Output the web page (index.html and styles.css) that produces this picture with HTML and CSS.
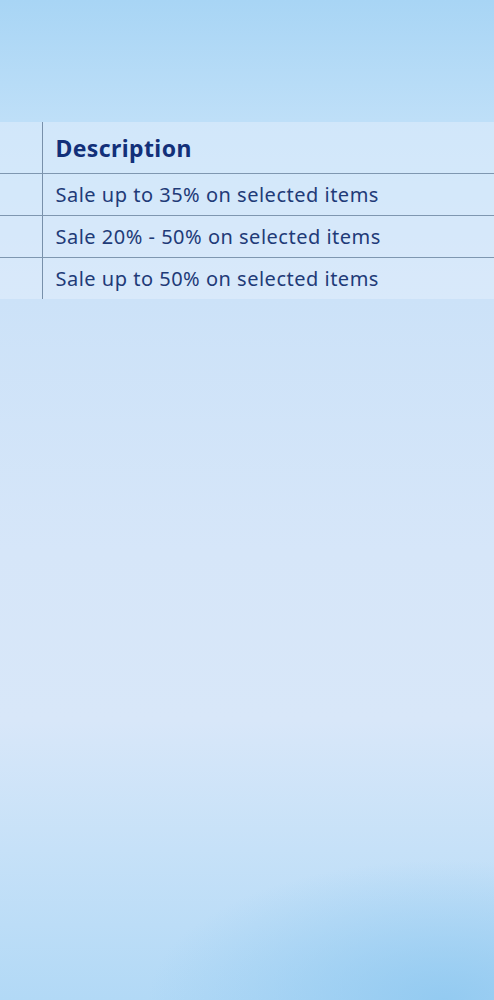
FILE: index.html
```html
<!DOCTYPE html>
<html lang="en">
<head>
  <meta charset="UTF-8">
  <meta name="viewport" content="width=device-width, initial-scale=1.0">
  <title>Sale</title>
  <link rel="stylesheet" href="styles.css">
</head>
<body>
  <div class="page">
    <table class="sale-table">
      <thead>
        <tr>
          <th class="col-side"></th>
          <th>Description</th>
        </tr>
      </thead>
      <tbody>
        <tr>
          <td class="col-side"></td>
          <td>Sale up to 35% on selected items</td>
        </tr>
        <tr>
          <td class="col-side"></td>
          <td>Sale 20% - 50% on selected items</td>
        </tr>
        <tr>
          <td class="col-side"></td>
          <td>Sale up to 50% on selected items</td>
        </tr>
      </tbody>
    </table>
  </div>
</body>
</html>
```

FILE: styles.css
```css
html, body {
  margin: 0;
  height: 100%;
}
body {
  font-family: "Noto Sans", Arial, sans-serif;
  background:
    radial-gradient(ellipse 60% 14% at 90% 100%, rgba(142,200,240,0.85), rgba(142,200,240,0) 100%),
    linear-gradient(to bottom, #a8d5f5 0%, #bedff8 12%, #cce2f8 30%, #d6e6f9 55%, #d8e7f9 72%, #c6e1f8 85%, #b2d9f6 100%);
}
.page {
  height: 1000px;
  padding-top: 122px;
  box-sizing: border-box;
}
.sale-table {
  width: 100%;
  border-collapse: collapse;
  background: rgba(232, 242, 253, 0.45);
  color: #1f3b78;
}
.sale-table th,
.sale-table td {
  text-align: left;
  padding: 0 0 0 13px;
  border-bottom: 1px solid #7f97b0;
}
.sale-table tr:last-child td {
  border-bottom: none;
}
.sale-table th {
  height: 50px;
  font-size: 23px;
  font-weight: 700;
  letter-spacing: 0.4px;
  color: #123079;
  padding-top: 1px;
}
.sale-table td {
  height: 41px;
  font-size: 20px;
  letter-spacing: 0.5px;
}
.sale-table .col-side {
  width: 42px;
  padding: 0;
  letter-spacing: 0;
  border-right: 1px solid #7890aa;
  box-sizing: border-box;
}
```
